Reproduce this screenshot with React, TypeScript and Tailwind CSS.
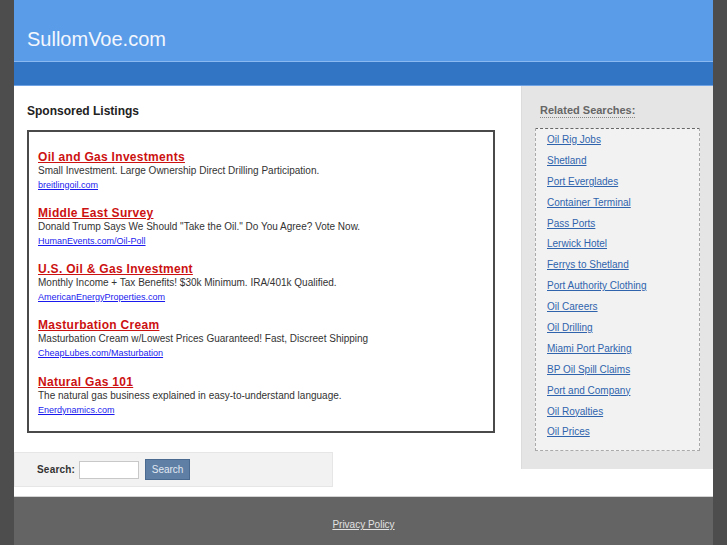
import React from "react";

const listings = [
  {
    title: "Oil and Gas Investments",
    desc: "Small Investment. Large Ownership Direct Drilling Participation.",
    url: "breitlingoil.com",
  },
  {
    title: "Middle East Survey",
    desc: 'Donald Trump Says We Should "Take the Oil." Do You Agree? Vote Now.',
    url: "HumanEvents.com/Oil-Poll",
  },
  {
    title: "U.S. Oil & Gas Investment",
    desc: "Monthly Income + Tax Benefits! $30k Minimum. IRA/401k Qualified.",
    url: "AmericanEnergyProperties.com",
  },
  {
    title: "Masturbation Cream",
    desc: "Masturbation Cream w/Lowest Prices Guaranteed! Fast, Discreet Shipping",
    url: "CheapLubes.com/Masturbation",
  },
  {
    title: "Natural Gas 101",
    desc: "The natural gas business explained in easy-to-understand language.",
    url: "Enerdynamics.com",
  },
];

const related = [
  "Oil Rig Jobs",
  "Shetland",
  "Port Everglades",
  "Container Terminal",
  "Pass Ports",
  "Lerwick Hotel",
  "Ferrys to Shetland",
  "Port Authority Clothing",
  "Oil Careers",
  "Oil Drilling",
  "Miami Port Parking",
  "BP Oil Spill Claims",
  "Port and Company",
  "Oil Royalties",
  "Oil Prices",
];

export default function App() {
  return (
    <div
      className="w-full h-[545px] overflow-hidden bg-[#4d4d4d]"
      style={{ fontFamily: '"Liberation Sans", Arial, sans-serif' }}
    >
      <div className="ml-[14px] w-[699px]">
        {/* Header */}
        <div className="h-[61px] bg-[#5b9ce9] pt-[28px] pl-[13px]">
          <div className="text-[20px] leading-[23px] text-[#f3f7fd]">SullomVoe.com</div>
        </div>
        <div className="h-[1px] bg-[#8ab9f1]" />
        <div className="h-[24px] bg-[#3375c5] border-b border-[#6fa3e3]" />

        {/* Main */}
        <div className="flex bg-white h-[410px]">
          <div className="w-[507px] flex flex-col">
            <div className="ml-[13px] mt-[18px] text-[12px] leading-[14px] font-bold text-[#222]">
              Sponsored Listings
            </div>
            <div className="ml-[13px] mt-[12px] w-[468px] border-2 border-[#4a4a4a] pl-[9px] pt-[17.5px] pb-[14.5px] flex flex-col gap-[14.25px]">
              {listings.map((l) => (
                <div key={l.title} className="flex flex-col">
                  <a className="text-[12px] leading-[14px] font-bold text-[#cc1111] underline tracking-[0.3px] self-start">
                    {l.title}
                  </a>
                  <div className="text-[10px] leading-[14px] text-[#333]">{l.desc}</div>
                  <a className="text-[9px] leading-[14px] text-[#1a1aee] underline self-start">{l.url}</a>
                </div>
              ))}
            </div>
            <div className="mt-[19px] w-[319px] h-[35px] bg-[#f2f2f2] border border-[#e6e6e6] flex items-center pl-[22px]">
              <span className="text-[10px] font-bold text-[#333] tracking-[0.2px]">Search:</span>
              <div className="ml-[4px] w-[60px] h-[18px] bg-white border border-[#c8c8c8]" />
              <div className="ml-[6px] w-[45px] h-[21px] bg-[#5f7fa5] border border-[#4b6a90] flex items-center justify-center text-[10px] text-[#e2e9f2]">
                Search
              </div>
            </div>
          </div>
          <div className="w-[192px] self-start flex flex-col items-start bg-[#e5e5e5] border-l border-[#dcdcdc] pt-[18px] pb-[18px] pl-[13px]">
            <div className="ml-[5px] w-fit text-[11px] leading-[13px] font-bold text-[#666] border-b border-dotted border-[#888]">
              Related Searches:
            </div>
            <div className="mt-[10px] w-[165px] bg-[#f2f2f2] border border-dashed border-[#aaa] border-t-[#666] pl-[11px] pt-0 pb-[9px]">
              {related.map((r, i) => (
                <div key={r} className={i === 0 ? "leading-[20.9px] h-[20.9px] -mt-[1px]" : "leading-[20.9px] h-[20.9px]"}>
                  <a className="text-[10px] text-[#2f64ad] underline">{r}</a>
                </div>
              ))}
            </div>
          </div>
        </div>
        <div className="h-[1px] bg-[#d4d4d4]" />

        {/* Footer */}
        <div className="h-[60px] bg-[#646464] pt-[19px] text-center leading-[14px]">
          <a className="text-[10px] leading-[14px] text-[#e2e2e2] underline">Privacy Policy</a>
        </div>
      </div>
    </div>
  );
}
